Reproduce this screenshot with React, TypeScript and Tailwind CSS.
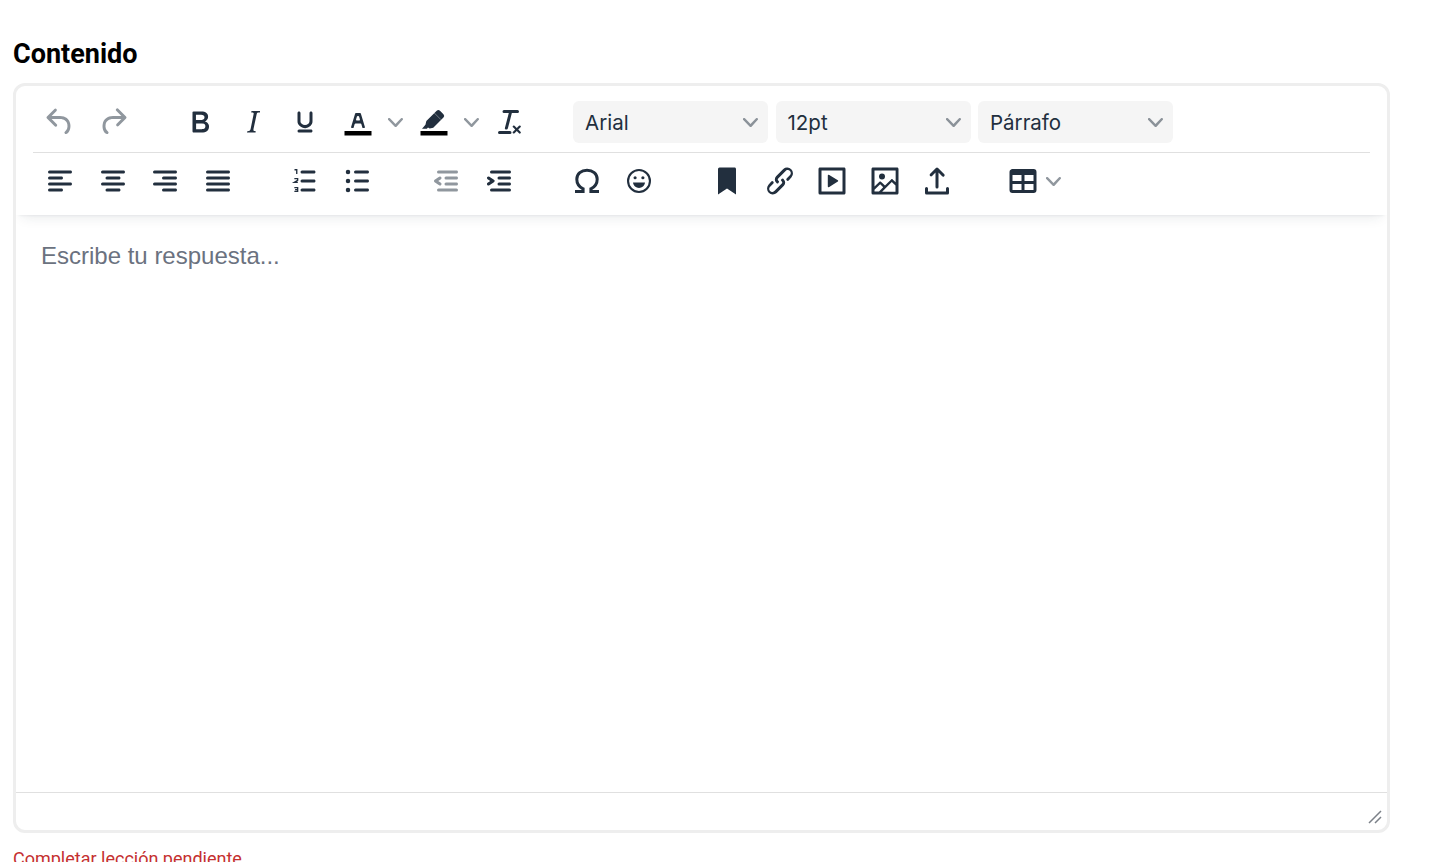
import React from "react";

const ink = "#222f3e";
type IconProps = { children: React.ReactNode; muted?: boolean };

function Icon({ children, muted }: IconProps) {
  return (
    <svg viewBox="0 0 24 24" width="36" height="36" fill={ink} fillOpacity={muted ? 0.5 : 1} fillRule="evenodd">
      {children}
    </svg>
  );
}

function Btn({ children, muted }: IconProps) {
  return (
    <button className="flex h-[42px] w-[52.5px] shrink-0 items-center justify-center">
      <Icon muted={muted}>{children}</Icon>
    </button>
  );
}

function Chevron() {
  return (
    <svg viewBox="0 0 10 10" width="15" height="15" fill={ink} fillOpacity={0.5}>
      <path d="M8.7 2.2c.3-.3.8-.3 1 0 .4.4.4.9 0 1.2L5.7 7.8c-.3.3-.9.3-1.2 0L.2 3.4a.8.8 0 0 1 0-1.2c.3-.3.8-.3 1.1 0L5 6l3.7-3.8Z" />
    </svg>
  );
}

function Caret() {
  return (
    <button className="flex h-[42px] w-[23.5px] shrink-0 items-center justify-center">
      <Chevron />
    </button>
  );
}

function Select({ label }: { label: string }) {
  return (
    <button className="flex h-[42px] w-[195px] shrink-0 items-center justify-between rounded-[6px] bg-[#f5f5f5] pl-[12px] pr-[10px] font-['Inter',sans-serif] text-[20.5px] text-[#222f3e]">
      <span className="pt-[2px]">{label}</span>
      <Chevron />
    </button>
  );
}

const Group = ({ children, gap }: { children: React.ReactNode; gap: string }) => (
  <div className={`${gap} flex shrink-0 items-center`}>{children}</div>
);

export default function App() {
  return (
    <div className="h-[862px] overflow-hidden bg-white pl-[13px] pr-[42px] pt-[38px] font-['Roboto',sans-serif]">
      <label className="block h-[45px] text-[27px] font-bold leading-[32px] text-black">Contenido</label>
      <div className="flex h-[750px] flex-col overflow-hidden rounded-[12px] border-[3px] border-[#eeeeee]">
        <div className="flex h-[129px] shrink-0 flex-col px-[17px] shadow-[0_3px_3px_-3px_rgba(34,47,62,0.1),0_8px_12px_-6px_rgba(34,47,62,0.1)]">
          <div className="flex h-[67px] shrink-0 items-start border-b border-[#e0e0e0] pl-px pt-[15px]">
            <Group gap="mr-[35px]">
              <Btn muted><path d="M6.4 8H12c3.7 0 6.2 2 6.8 5.1.6 2.7-.4 5.6-2.3 6.8a1 1 0 0 1-1-1.8c1.1-.6 1.8-2.7 1.4-4.6-.5-2.1-2.1-3.5-4.9-3.5H6.4l3.3 3.3a1 1 0 1 1-1.4 1.4l-5-5a1 1 0 0 1 0-1.4l5-5a1 1 0 0 1 1.4 1.4L6.4 8Z" /></Btn>
              <Btn muted><path d="M17.6 10H12c-2.8 0-4.4 1.4-4.9 3.5-.4 2 .3 4 1.4 4.6a1 1 0 1 1-1 1.8c-2-1.2-2.9-4.1-2.3-6.8.6-3 3-5.1 6.8-5.1h5.6l-3.3-3.3a1 1 0 1 1 1.4-1.4l5 5a1 1 0 0 1 0 1.4l-5 5a1 1 0 0 1-1.4-1.4l3.3-3.3Z" /></Btn>
            </Group>
            <Group gap="mr-[36px]">
              <Btn><path d="M7.8 19c-.3 0-.5 0-.6-.2l-.2-.5V5.7c0-.2 0-.4.2-.5l.6-.2h5c1.5 0 2.7.3 3.5 1 .7.6 1.1 1.4 1.1 2.5a3 3 0 0 1-.6 1.9c-.4.6-1 1-1.6 1.2.4.1.9.3 1.3.6s.8.7 1 1.2c.4.4.5 1 .5 1.6 0 1.3-.4 2.3-1.3 3-.8.7-2.1 1-3.8 1H7.8Zm5-8.3c.6 0 1.2-.1 1.6-.5.4-.3.6-.7.6-1.3 0-1.1-.8-1.7-2.3-1.7H9.3v3.5h3.4Zm.5 6c.7 0 1.3-.1 1.7-.4.4-.4.6-.9.6-1.5s-.2-1-.7-1.4c-.4-.3-1-.4-2-.4H9.4v3.8h4Z" /></Btn>
              <Btn><path d="M16.7 4.7l-.1.9h-.3c-.6 0-1 0-1.4.3-.3.3-.4.6-.5 1.1l-2.1 9.8v.6c0 .5.4.8 1.4.8h.2l-.2.8H8l.2-.8h.2c1.1 0 1.8-.5 2-1.5l2-9.8.1-.5c0-.6-.4-.8-1.4-.8h-.3l.2-.9h5.8Z" /></Btn>
              <Btn><path d="M16 5c.6 0 1 .4 1 1v5.5a4 4 0 0 1-.4 1.8l-1 1.4a5.3 5.3 0 0 1-5.5 1 5 5 0 0 1-1.6-1c-.5-.4-.8-.9-1.1-1.4a4 4 0 0 1-.4-1.8V6c0-.6.4-1 1-1s1 .4 1 1v5.5c0 .3 0 .6.2 1l.6.7a3.3 3.3 0 0 0 2.2.8 3.4 3.4 0 0 0 2.2-.8c.3-.2.4-.5.6-.8l.2-.9V6c0-.6.4-1 1-1ZM8 17h8c.6 0 1 .4 1 1s-.4 1-1 1H8a1 1 0 0 1 0-2Z" /></Btn>
              <Btn>
                <path fill="#000" d="M3 18h18v3H3z" />
                <path d="M8.7 16h-.8a.5.5 0 0 1-.5-.6l2.7-9c.1-.3.3-.4.5-.4h2.8c.2 0 .4.1.5.4l2.7 9a.5.5 0 0 1-.5.6h-.8a.5.5 0 0 1-.4-.4l-.7-2.2c0-.3-.3-.4-.5-.4h-3.4c-.2 0-.4.1-.5.4l-.7 2.2c0 .3-.2.4-.4.4Zm2.6-7.6-.6 2a.5.5 0 0 0 .5.6h1.6a.5.5 0 0 0 .5-.6l-.6-2c0-.3-.3-.4-.5-.4h-.4c-.2 0-.4.1-.5.4Z" />
              </Btn>
              <Caret />
              <Btn>
                <path fill="#000" d="M3 18h18v3H3z" />
                <path d="M4 16.500 6.300 13.800 6.900 11.400 13.800 4.500a1.600 1.600 0 0 1 2.200 0L18.300 6.800a1.600 1.600 0 0 1 0 2.200L11.500 15.800 9.100 16.400 8 15.700 7.200 16.500Z" />
                <path fill="none" stroke="#fff" strokeOpacity="0.6" strokeWidth="0.4" d="M12.200 6 16.600 10.400" />
              </Btn>
              <Caret />
              <Btn><path d="M13.2 6a1 1 0 0 1 0 .2l-2.6 10a1 1 0 0 1-1 .8h-.2a.8.8 0 0 1-.8-1l2.6-10H8a1 1 0 1 1 0-2h9a1 1 0 0 1 0 2h-3.8ZM5 18h7a1 1 0 0 1 0 2H5a1 1 0 0 1 0-2Zm13 1.5L16.500 18 15 19.500a.7.7 0 0 1-1-1l1.500-1.500-1.500-1.500a.7.7 0 0 1 1-1l1.500 1.500 1.500-1.500a.7.7 0 0 1 1 1L17.500 17l1.500 1.500a.7.7 0 0 1-1 1Z" /></Btn>
            </Group>
            <div className="flex shrink-0 items-center gap-[7.5px] pl-px">
              <Select label="Arial" />
              <Select label="12pt" />
              <Select label="Párrafo" />
            </div>
          </div>
          <div className="flex h-[56px] shrink-0 items-center pl-px">
            <Group gap="mr-[34.5px]">
              <Btn><path d="M5 5h14c.6 0 1 .4 1 1s-.4 1-1 1H5a1 1 0 1 1 0-2Zm0 4h8c.6 0 1 .4 1 1s-.4 1-1 1H5a1 1 0 1 1 0-2Zm0 8h8c.6 0 1 .4 1 1s-.4 1-1 1H5a1 1 0 0 1 0-2Zm0-4h14c.6 0 1 .4 1 1s-.4 1-1 1H5a1 1 0 0 1 0-2Z" /></Btn>
              <Btn><path d="M5 5h14c.6 0 1 .4 1 1s-.4 1-1 1H5a1 1 0 1 1 0-2Zm3 4h8c.6 0 1 .4 1 1s-.4 1-1 1H8a1 1 0 1 1 0-2Zm0 8h8c.6 0 1 .4 1 1s-.4 1-1 1H8a1 1 0 0 1 0-2Zm-3-4h14c.6 0 1 .4 1 1s-.4 1-1 1H5a1 1 0 0 1 0-2Z" /></Btn>
              <Btn><path d="M5 5h14c.6 0 1 .4 1 1s-.4 1-1 1H5a1 1 0 1 1 0-2Zm6 4h8c.6 0 1 .4 1 1s-.4 1-1 1h-8a1 1 0 0 1 0-2Zm0 8h8c.6 0 1 .4 1 1s-.4 1-1 1h-8a1 1 0 0 1 0-2Zm-6-4h14c.6 0 1 .4 1 1s-.4 1-1 1H5a1 1 0 0 1 0-2Z" /></Btn>
              <Btn><path d="M5 5h14c.6 0 1 .4 1 1s-.4 1-1 1H5a1 1 0 1 1 0-2Zm0 4h14c.6 0 1 .4 1 1s-.4 1-1 1H5a1 1 0 1 1 0-2Zm0 4h14c.6 0 1 .4 1 1s-.4 1-1 1H5a1 1 0 0 1 0-2Zm0 4h14c.6 0 1 .4 1 1s-.4 1-1 1H5a1 1 0 0 1 0-2Z" /></Btn>
            </Group>
            <Group gap="mr-[36.5px]">
              <Btn>
                <path d="M10 17h8c.6 0 1 .4 1 1s-.4 1-1 1h-8a1 1 0 0 1 0-2Zm0-6h8c.6 0 1 .4 1 1s-.4 1-1 1h-8a1 1 0 0 1 0-2Zm0-6h8c.6 0 1 .4 1 1s-.4 1-1 1h-8a1 1 0 1 1 0-2Z" />
                <path fill="none" stroke={ink} strokeWidth="0.9" d="M5 4.500H6.500V7.300M4.900 10.400H7.100V11.600L4.900 12.900H7.200M4.900 16.400H7.100V18.900H4.900M5.400 17.700H7" />
              </Btn>
              <Btn><path d="M11 5h8c.6 0 1 .4 1 1s-.4 1-1 1h-8a1 1 0 0 1 0-2Zm0 6h8c.6 0 1 .4 1 1s-.4 1-1 1h-8a1 1 0 0 1 0-2Zm0 6h8c.6 0 1 .4 1 1s-.4 1-1 1h-8a1 1 0 0 1 0-2Z" /><circle cx="6" cy="6" r="1.500" /><circle cx="6" cy="12" r="1.500" /><circle cx="6" cy="18" r="1.500" /></Btn>
            </Group>
            <Group gap="mr-[35.5px]">
              <Btn muted><path d="M7 5h12c.6 0 1 .4 1 1s-.4 1-1 1H7a1 1 0 1 1 0-2Zm5 4h7c.6 0 1 .4 1 1s-.4 1-1 1h-7a1 1 0 0 1 0-2Zm0 4h7c.6 0 1 .4 1 1s-.4 1-1 1h-7a1 1 0 0 1 0-2Zm-5 4h12a1 1 0 0 1 0 2H7a1 1 0 0 1 0-2Zm1.600-3.800a1 1 0 0 1-1.200 1.600l-3-2a1 1 0 0 1 0-1.600l3-2a1 1 0 0 1 1.200 1.600L6.800 12l1.800 1.200Z" /></Btn>
              <Btn><path d="M7 5h12c.6 0 1 .4 1 1s-.4 1-1 1H7a1 1 0 1 1 0-2Zm5 4h7c.6 0 1 .4 1 1s-.4 1-1 1h-7a1 1 0 0 1 0-2Zm0 4h7c.6 0 1 .4 1 1s-.4 1-1 1h-7a1 1 0 0 1 0-2Zm-5 4h12a1 1 0 0 1 0 2H7a1 1 0 0 1 0-2Zm-2.600-3.800L6.200 12l-1.800-1.200a1 1 0 0 1 1.200-1.600l3 2a1 1 0 0 1 0 1.600l-3 2a1 1 0 1 1-1.200-1.600Z" /></Btn>
            </Group>
            <Group gap="mr-[35.5px]">
              <Btn><path fill="none" stroke={ink} strokeWidth="2" d="M4 19H9.400V17.200C6.800 15.900 5.200 13.800 5.200 10.800 5.200 7 8.200 4.800 12 4.800S18.800 7 18.800 10.800C18.800 13.800 17.200 15.900 14.600 17.200V19H20" /></Btn>
              <Btn>
                <circle cx="12" cy="12" r="7.300" fill="none" stroke={ink} strokeWidth="1.400" />
                <circle cx="9.400" cy="9.800" r="1.050" /><circle cx="14.600" cy="9.800" r="1.050" />
                <path d="M8 13h8c-.3 2.200-2 3.600-4 3.600S8.300 15.200 8 13Z" />
              </Btn>
            </Group>
            <Group gap="mr-[33.5px]">
              <Btn><path d="M6 4v17l6-4 6 4V4c0-.6-.4-1-1-1H7a1 1 0 0 0-1 1Z" /></Btn>
              <Btn><path d="M6.200 12.300a1 1 0 0 1 1.400 1.400l-2 2a2 2 0 1 0 2.800 2.800l4.800-4.800a1 1 0 0 0 0-1.400 1 1 0 1 1 1.400-1.300 2.900 2.900 0 0 1 0 4.100L9.800 20a3.900 3.900 0 0 1-5.500-5.500l1.900-2.200Zm11.600-.6a1 1 0 0 1-1.400-1.400l2-2a2 2 0 1 0-2.800-2.800L10.800 10.300a1 1 0 0 0 0 1.400 1 1 0 1 1-1.400 1.300 2.900 2.900 0 0 1 0-4.100L14.200 4a3.900 3.900 0 0 1 5.500 5.500l-1.900 2.200Z" /></Btn>
              <Btn>
                <path d="M19 5H5v14h14V5ZM4 3h16c.6 0 1 .4 1 1v16c0 .6-.4 1-1 1H4a1 1 0 0 1-1-1V4c0-.6.4-1 1-1Z" />
                <path d="M9.200 8.300c0-.4.400-.6.700-.4l6 3.600c.3.200.3.700 0 .9l-6 3.700c-.3.200-.7 0-.7-.4V8.300Z" />
              </Btn>
              <Btn><path d="M5 15.700l3.300-3.200c.3-.3.700-.3 1 0L12 15l4.100-4c.3-.4.800-.4 1 0l2 1.900V5H5v10.700ZM5 18v1h3l2.800-2.900-2-2L5 17.900Zm14-3l-2.500-2.400-6.400 6.500H19v-4ZM4 3h16c.6 0 1 .4 1 1v16c0 .6-.4 1-1 1H4a1 1 0 0 1-1-1V4c0-.6.400-1 1-1Zm6 8a2 2 0 1 0 0-4 2 2 0 0 0 0 4Z" /></Btn>
              <Btn><path d="M18 19v-2a1 1 0 0 1 2 0v3a1 1 0 0 1-1 1H5a1 1 0 0 1-1-1v-3a1 1 0 0 1 2 0v2h12ZM11 6.400L8.700 8.700a1 1 0 0 1-1.400-1.400l4-4a1 1 0 0 1 1.400 0l4 4a1 1 0 1 1-1.400 1.400L13 6.400V16a1 1 0 0 1-2 0V6.400Z" /></Btn>
            </Group>
            <Group gap="mr-0">
              <Btn><path d="M19 4a2 2 0 0 1 2 2v12a2 2 0 0 1-2 2H5a2 2 0 0 1-2-2V6c0-1.100.900-2 2-2h14ZM5 14v4h6v-4H5Zm14 0h-6v4h6v-4Zm0-6h-6v4h6V8ZM5 12h6V8H5v4Z" /></Btn>
              <div className="-ml-[4px] flex items-center"><Chevron /></div>
            </Group>
          </div>
        </div>
        <div className="flex-1 px-[25px] pt-[27px] font-['Liberation_Sans',sans-serif] text-[24px] leading-[28px] text-[#6b7280]">
          Escribe tu respuesta...
        </div>
        <div className="relative h-[38px] shrink-0 border-t border-[#e0e0e0]">
          <svg className="absolute bottom-[6px] right-[5px]" width="14" height="14" viewBox="0 0 14 14" fill="none" stroke="#7b8088" strokeWidth="1.500">
            <path d="M1 13 13 1M7 13l6-6" />
          </svg>
        </div>
      </div>
      <p className="mt-[16px] text-[18px] leading-[20px] text-[#c53030]">Completar lección pendiente</p>
    </div>
  );
}
